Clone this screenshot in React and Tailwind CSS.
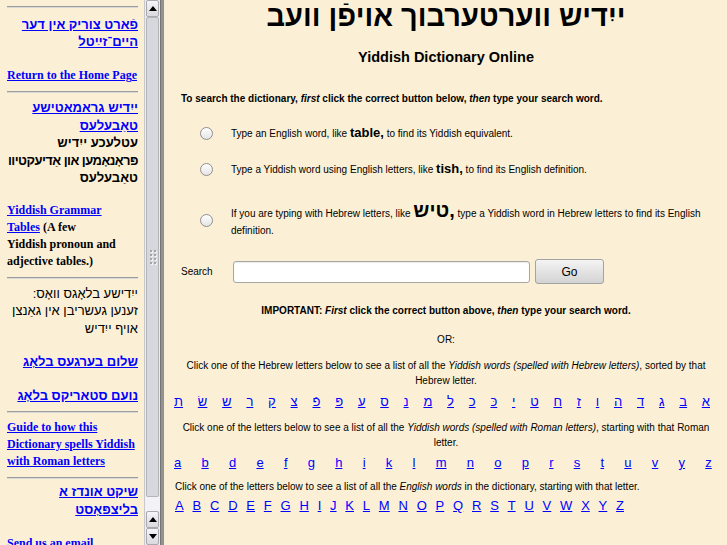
import React from 'react';

const hebLetters = ['א', 'ב', 'ג', 'ד', 'ה', 'ו', 'ז', 'ח', 'ט', 'י', 'כּ', 'כ', 'ל', 'מ', 'נ', 'ס', 'ע', 'פּ', 'פֿ', 'צ', 'ק', 'ר', 'ש', 'שׂ', 'ת'];
const romanLetters = ['a', 'b', 'd', 'e', 'f', 'g', 'h', 'i', 'k', 'l', 'm', 'n', 'o', 'p', 'r', 's', 't', 'u', 'v', 'y', 'z'];
const capLetters = 'ABCDEFGHIJKLMNOPQRSTUVWXYZ'.split('');

const Rule = () => <div className="h-[2px] border-t border-[#9c9c9c] border-b-[#d8d8d8] border-b" />;

const Radio = () => (
  <span className="block w-[13px] h-[13px] rounded-full border border-[#8f8f8f] bg-gradient-to-b from-white to-[#e4e4e4]" />
);

const ArrowBtn = ({ down }) => (
  <div className="h-[17px] mx-[1px] rounded-[2px] border border-[#a9a9ae] bg-gradient-to-b from-[#f6f6f8] to-[#d9d9de] flex items-center justify-center">
    <svg width="8" height="5" viewBox="0 0 8 5">
      {down ? <polygon points="0,0 8,0 4,5" fill="#000" /> : <polygon points="0,5 8,5 4,0" fill="#000" />}
    </svg>
  </div>
);

const Scrollbar = () => (
  <div className="w-[16px] h-full shrink-0 flex flex-col bg-[#ebecf2] border-l border-[#c9c9cc]">
    <ArrowBtn />
    <div className="h-[486px] mx-[1px] rounded-[2px] border border-[#b4b4b9] bg-[#d7d8dd] flex items-center justify-center">
      <div className="grid grid-cols-2 gap-[2px]">
        {Array.from({ length: 8 }).map((_, i) => (
          <span key={i} className="block w-[2px] h-[2px] bg-[#a4a4aa] shadow-[1px_1px_0_#f4f4f6]" />
        ))}
      </div>
    </div>
    <div className="h-[15px] bg-[#f3f3f7]" />
    <ArrowBtn />
    <ArrowBtn down />
  </div>
);

const heb = "font-['Liberation_Sans',Arial,sans-serif] text-[13px] text-right whitespace-nowrap";

const Sidebar = () => (
  <div className="w-[160px] h-full shrink-0 flex overflow-hidden">
    <div className="w-[144px] pl-[7px] pr-[6px] pt-[6px] font-['Liberation_Serif',serif] text-[12px] font-bold leading-[17px] text-black whitespace-nowrap">
      <Rule />
      <div dir="rtl" className={`mt-[8px] leading-[17px] ${heb}`}>
        <a className="text-[#0000ff] underline">פֿאַרט צוריק אין דער<br />היים־זײַטל</a>
      </div>
      <div className="mt-[17px]">
        <a className="text-[#0000ff] underline">Return to the Home Page</a>
      </div>
      <div className="mt-[7px]"><Rule /></div>
      <div dir="rtl" className={`mt-[6px] leading-[17.5px] ${heb}`}>
        <a className="text-[#0000ff] underline">ייִדיש גראַמאַטישע<br />טאַבעלעס</a>
        <div>
          עטלעכע ייִדיש<br />
          <span className="tracking-[-0.55px]">פּראָנאָמען און אַדיעקטיוו</span><br />
          טאַבעלעס
        </div>
      </div>
      <div className="mt-[15px]">
        <a className="text-[#0000ff] underline">Yiddish Grammar<br />Tables</a> (A few<br />Yiddish pronoun and<br />adjective tables.)
      </div>
      <div className="mt-[7px]"><Rule /></div>
      <div dir="rtl" className={`mt-[6px] font-normal leading-[17.5px] ${heb}`}>
        ייִדישע בלאָגס וואָס:<br />זענען געשריבן אין גאַנצן<br />אויף ייִדיש
      </div>
      <div dir="rtl" className={`mt-[16px] leading-[17px] ${heb}`}>
        <a className="text-[#0000ff] underline">שלום בערגעס בלאָג</a>
      </div>
      <div dir="rtl" className={`mt-[17px] leading-[17px] ${heb}`}>
        <a className="text-[#0000ff] underline">נועם סטאַריקס בלאָג</a>
      </div>
      <div className="mt-[7px]"><Rule /></div>
      <div className="mt-[6px]">
        <a className="text-[#0000ff] underline">Guide to how this<br />Dictionary spells Yiddish<br />with Roman letters</a>
      </div>
      <div className="mt-[7px]"><Rule /></div>
      <div dir="rtl" className={`mt-[4px] leading-[18px] ${heb}`}>
        <a className="text-[#0000ff] underline">שיקט אונדז אַ<br />בליצפּאָסט</a>
      </div>
      <div className="mt-[16px]">
        <a className="text-[#0000ff] underline">Send us an email</a>
      </div>
    </div>
    <Scrollbar />
  </div>
);

const Main = () => (
  <div className="flex-1 h-full overflow-hidden pl-[10px] pr-[9px] font-['Liberation_Sans',Arial,sans-serif] text-black">
    <h1 dir="rtl" className="pt-[1px] text-center text-[29px] font-bold leading-[31px]">ייִדיש ווערטערבוך אויפֿן וועב</h1>
    <p className="mt-[15px] text-center text-[14.5px] font-bold leading-[20px]">Yiddish Dictionary Online</p>
    <p className="mt-[25px] pl-[7px] text-[10px] font-bold leading-[14px]">
      To search the dictionary, <i>first</i> click the correct button below, <i>then</i> type your search word.
    </p>

    <div className="mt-[19px] pl-[7px] flex items-center">
      <div className="w-[50px] flex justify-center"><Radio /></div>
      <div className="text-[10px] leading-[17px]">
        Type an English word, like <b className="text-[13px] leading-[10px]">table,</b> to find its Yiddish equivalent.
      </div>
    </div>
    <div className="mt-[19px] pl-[7px] flex items-center">
      <div className="w-[50px] flex justify-center"><Radio /></div>
      <div className="text-[10px] leading-[17px]">
        Type a Yiddish word using English letters, like <b className="text-[13px] leading-[10px]">tish,</b> to find its English definition.
      </div>
    </div>
    <div className="mt-[27px] pl-[7px] flex items-center">
      <div className="w-[50px] flex justify-center pb-[4px]"><Radio /></div>
      <div className="flex-1 text-[10px] leading-[17px]">
        If you are typing with Hebrew letters, like <b className="text-[20px] leading-[10px]">טיש,</b> type a Yiddish word in Hebrew letters to find its English definition.
      </div>
    </div>

    <div className="mt-[20px] pl-[7px] flex items-center">
      <span className="w-[52px] text-[10px]">Search</span>
      <input
        type="text"
        className="w-[297px] h-[22px] rounded-[3px] border border-[#a6a6a6] bg-white shadow-[inset_0_1px_1px_rgba(0,0,0,0.08)] outline-none"
      />
      <button className="ml-[5px] w-[69px] h-[25px] rounded-[3px] border border-[#a3a3a3] bg-gradient-to-b from-[#f4f4f4] to-[#d3d3d3] text-[12px] text-black">
        Go
      </button>
    </div>

    <p className="mt-[20px] text-center text-[10px] font-bold leading-[14px]">
      IMPORTANT: <i>First</i> click the correct button above, <i>then</i> type your search word.
    </p>
    <p className="mt-[15px] text-center text-[10px] leading-[14px]">OR:</p>
    <p className="mt-[11px] text-center text-[10px] leading-[15px]">
      Click one of the Hebrew letters below to see a list of all the <i>Yiddish words (spelled with Hebrew letters)</i>, sorted by that Hebrew letter.
    </p>
    <div dir="rtl" className="mt-[5px] w-[536px] flex justify-between text-[13px] leading-[17px]">
      {hebLetters.map((l) => (
        <a key={l} className="text-[#0000ff] underline">{l}</a>
      ))}
    </div>
    <p className="mt-[10px] text-center text-[10px] leading-[15px]">
      Click one of the letters below to see a list of all the <i>Yiddish words (spelled with Roman letters)</i>, starting with that Roman letter.
    </p>
    <div className="mt-[4px] w-[538px] flex justify-between text-[13px] leading-[17px]">
      {romanLetters.map((l) => (
        <a key={l} className="text-[#0000ff] underline">{l}</a>
      ))}
    </div>
    <p className="mt-[8px] pl-px text-[10px] leading-[15px]">
      Click one of the letters below to see a list of all the <i>English words</i> in the dictionary, starting with that letter.
    </p>
    <div className="mt-[3px] pl-px flex gap-[8.8px] text-[13px] leading-[17px]">
      {capLetters.map((l) => (
        <a key={l} className="text-[#0000ff] underline">{l}</a>
      ))}
    </div>
  </div>
);

export default function App() {
  return (
    <div className="w-[727px] h-[545px] overflow-hidden flex bg-[#fbf0d6]">
      <Sidebar />
      <div className="w-[4px] h-full shrink-0 bg-[#929292] border-l border-[#767676]" />
      <Main />
    </div>
  );
}
